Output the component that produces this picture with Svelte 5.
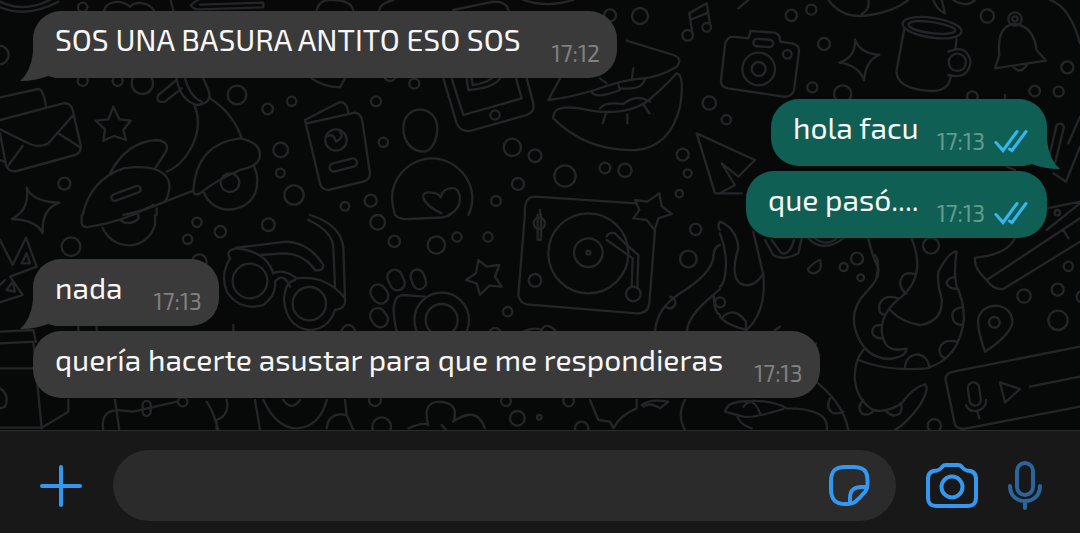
<script>
  const groups = [
    { own: false, items: [{ text: 'SOS UNA BASURA ANTITO ESO SOS', time: '17:12' }] },
    { own: true, items: [{ text: 'hola facu', time: '17:13' }, { text: 'que pasó....', time: '17:13' }] },
    { own: false, items: [{ text: 'nada', time: '17:13' }, { text: 'quería hacerte asustar para que me respondieras', time: '17:13' }] }
  ];

  let draft = $state('');

  // Wallpaper doodles, drawn as six tiles of 1080 x 645 units.
  const tiles = [
    {
      x: 0, y: 0,
      circles: [[248,22,14],[248,243,15],[353,243,15],[427,250,32],[711,285,28],[803,327,16],[875,304,14],[842,450,22],[841,519,13],[882,585,29],[193,551,18],[1035,619,13],[-2,165,28],[690,548,28],[1008,420,32]],
      pills: [[378,580,92,20,-20],[1030,495,84,25,-14]],
      d: 'M0 5Q70 40 150 0M0 22Q80 55 175 5M312 32C320 5 360-5 390 20C410 0 450 10 462 32M512 0L520 32M572 15L600-5M572 15Q580 30 600 28L790 22V8L600 14M950 30Q960-5 1000 0Q1050 0 1060 30M0 292L115 267Q130 268 138 318M0 360L190 310Q212 308 218 330L242 435Q245 458 225 465L50 513Q25 517 18 495L0 400M0 388L90 432Q120 445 145 430L220 345M68 438L22 500M172 398L238 440M0 480L12 485M340 320L358 358L392 362L370 390L378 420L342 408L310 422L315 388L287 362L325 358ZM80 562Q95 605 178 608Q125 625 128 700Q110 660 35 657Q90 630 80 562M330 520Q380 425 470 420Q510 425 498 455L465 505M248 645Q270 540 370 505Q480 490 505 540Q515 570 495 605Q440 630 370 645M495 605L580 572M470 625V645M580 570Q590 430 720 415Q790 430 778 475Q770 500 720 510Q650 540 600 580Q580 590 580 570M612 578C640 650 740 640 765 580Q780 540 763 500M530 235Q540 300 590 315Q640 310 625 270L610 235M555 235Q570 290 605 305M530 240L475 285Q465 310 495 305L545 265M583 315Q610 380 570 450Q540 500 500 515M630 295Q700 340 725 415M915 360L1015 308Q1040 300 1045 340M920 370L1065 338Q1085 340 1088 370L1110 520Q1110 540 1090 545L985 570Q965 570 960 550L915 360M985 408Q1000 398 1008 425Q1035 410 1020 395M935 235Q970 260 1020 262L1035 235'
    },
    {
      x: 1080, y: 0,
      circles: [[840,48,24],[163,251,15],[90,225,18],[48,304,15],[70,427,14],[405,345,14],[457,442,26],[525,467,19],[615,528,32],[735,504,16],[795,511,20],[474,552,18],[408,603,15],[32,602,18],[1048,309,20],[968,464,18],[983,520,12],[958,581,11],[750,46,18],[983,106,16],[1040,82,13]],
      pills: [],
      d: 'M58 30Q60 10 100 0M280 30L400 5Q440 5 445 30M490 0Q560 25 640 0M250 235L290 370Q300 395 330 393L500 345Q525 335 520 310L500 235M275 235L310 345L485 295L468 235M320 235L325 270Q400 265 420 235M335 235L338 255Q375 250 395 235M130 385C130 310 230 310 232 385C230 430 210 455 190 455C160 455 130 430 130 385M105 645C70 540 150 475 215 475C300 475 365 565 325 645M245 640C180 610 175 570 215 578Q235 580 242 592Q250 560 285 565Q305 580 298 610Q290 635 265 645M800 122L940 165Q970 175 950 200Q900 230 850 235Q790 240 740 258Q650 290 565 300L600 235M580 350C580 320 620 320 660 325C720 340 800 345 860 305Q910 265 950 220Q975 225 960 320Q930 440 830 450Q680 455 580 355M695 275Q705 300 780 270L775 255M785 265Q850 270 855 235M720 325Q735 305 790 312Q830 280 870 305M738 340L728 370M802 343V370M850 312L868 340M720 235L740 250M820 205L815 240M997 98L988 40L1040 10L1050 72M990 60L1045 38M1145 580L1065 580L1010 400L1185 480M825 600L862 605L898 580L905 618L935 642L895 655L884 690L860 660L820 655L838 630ZM495 645Q490 590 525 590L830 610M540 645V630'
    },
    {
      x: 2160, y: 0,
      circles: [[214,46,17],[274,29,15],[312,132,18],[277,262,15],[368,282,26],[802,48,20],[1042,202,18],[944,273,16],[1016,275,15],[757,290,16],[19,359,14],[202,163,13],[116,207,49],[116,207,21],[712,187,26],[885,57,20],[885,57,8],[1012,638,8]],
      pills: [[130,129,60,22,4]],
      d: 'M55 25L85 0M325 0Q370 60 450 45Q520 35 565 0M445 0Q450 30 425 42M640 0Q650 30 675 40L665 0M700 0Q740 25 765 0M990 0Q1050 20 1080 130M40 110L85 115L92 93L165 98Q182 105 180 125L215 130Q240 135 237 155L222 270Q215 292 190 290L25 265Q0 260 3 240L15 135Q20 110 40 110M405 118Q420 160 478 165Q438 180 432 240Q415 195 358 188Q408 172 405 118M553 85L530 210Q525 265 630 273Q690 275 692 225M710 118L706 145M685 155Q740 130 752 185Q745 240 685 225M548 70C560 30 730 60 724 95C720 135 545 110 548 70M565 72C580 50 710 75 706 92C700 112 565 98 565 72M825 205L838 165Q830 80 880 72Q940 75 950 150L978 182ZM880 200Q900 225 920 195M105 480L55 530L5 490L45 555L0 580M985 480L1010 375Q1025 365 1032 380L1005 490M1000 520L1038 545L1080 440M1080 350L1045 430M980 625L1080 605M980 690L1080 610M860 500L885 510M855 285V300'
    },
    {
      x: 0, y: 645,
      circles: [[213,95,28],[591,22,14],[661,50,17],[563,73,14],[805,29,19],[598,140,22],[1045,350,20],[548,560,14],[750,198,52],[928,266,50]],
      pills: [[440,580,24,45,0]],
      d: 'M245 0V25Q250 40 270 35Q370 20 460-30M308 38C340 110 440 110 465 30V0M360 15Q385 35 415 12V0M0 75L38 150L78 68L110 155L30 185L68 240L0 262M65 145L80 115L90 145ZM20 225L38 200L45 230ZM0 210L15 195M690 130Q660 180 680 230Q720 290 790 270Q830 240 825 200M690 130Q675 105 710 100Q800 110 820 175Q850 160 890 190Q980 180 1035 250Q1040 280 1005 285Q985 345 925 345Q860 335 852 255Q855 200 885 195M825 200Q850 170 870 215M710 98L860 80Q930 85 970 150Q970 170 945 165Q910 115 850 115L780 120M930 0Q1025 30 1030 100L1035 245M925 15Q1000 50 1000 100L1005 215M0 350L100 345L108 380L0 385M0 460H100M100 380L125 640M0 638H125L205 590V555M0 520Q30 540 15 575L0 580M235 335V350M290 335V350M700 330V350M310 645Q300 590 350 585L400 590L530 560M345 555L358 645M680 555Q690 600 650 615V645M620 560Q640 590 655 645M765 555L780 645M790 555Q830 640 890 640Q960 635 980 555M850 555Q875 590 900 555M980 640Q985 590 1040 600L1035 555M1040 600L1060 645'
    },
    {
      x: 1080, y: 645,
      circles: [[53,22,22],[103,79,17],[229,90,26],[291,66,14],[384,66,14],[443,290,14],[1007,43,17],[985,132,25],[45,555,18],[438,558,15],[472,610,22],[538,607,7],[626,558,16],[65,635,28],[665,640,20],[405,357,18],[685,115,120],[685,113,43],[685,113,6],[820,237,22],[525,196,19],[245,315,82],[245,315,48],[538,25,17]],
      pills: [[108,195,44,64,-25],[175,193,40,60,-20],[58,237,46,60,-35],[57,308,46,60,-35]],
      d: 'M105 0Q120 15 150 12L230 8Q250 10 270 0M495-5L475 240Q480 265 500 268L830 295Q865 295 868 265L885 45M740 65Q745 50 765 55L800 90L835 120L832 215M740 75L790 110L818 130L815 215M533 0V75H543V0M355 135L380 155L418 150L405 185L425 215L388 212L360 240L350 205L318 195L348 175ZM110 350Q85 240 130 240L195 245M490 350Q520 335 545 345Q555 320 585 345M145 640Q190 620 205 630Q185 560 240 560Q300 565 280 620Q350 570 375 640M245 630L258 645M690 555L715 615L750 620L760 640Q780 600 830 580V555M845 570Q870 550 925 560L900 580Q870 560 850 575M975 555Q950 600 975 645M1080 90Q1060 95 1060 130Q1050 180 960 235Q890 280 885 350M980 350Q985 300 1060 240L1080 222M915 272Q930 290 945 270Q950 250 930 245M1062 245Q1060 290 1080 300M1080 20Q1070 35 1080 45'
    },
    {
      x: 2160, y: 645,
      circles: [[411,131,18],[371,156,12],[422,188,10],[633,92,24],[912,243,20],[1013,224,18],[1045,154,14],[1014,316,29],[823,322,16],[643,632,20],[1088,245,18],[0,262,15]],
      pills: [[763,537,34,70,-8]],
      d: 'M0 20Q50 40 55 100Q30 180 60 205Q100 225 130 175M0 55Q25 120 15 180Q10 210 0 215M100 50L130 180Q140 290 80 345Q20 330 0 305M5 310Q40 270 78 320V345M135 75L160 120Q190 140 235 115L245 70M155 75L185 115Q210 120 222 75M265 70Q310 115 370 70M285 70Q320 95 350 70M265 160Q285 140 300 135Q310 170 280 175Q262 172 265 160M445 70Q455 120 475 160Q480 190 440 230Q390 280 405 340Q430 430 510 432Q560 425 560 400Q490 420 485 345Q485 290 545 245Q620 180 575 70M415 435Q500 470 620 460Q720 430 732 310Q730 250 710 215Q700 170 710 110Q690 105 655 170Q650 200 665 250Q670 320 600 330Q550 325 510 285M585 178Q545 165 540 205Q545 230 560 235M535 250Q490 235 478 270Q475 295 492 300M480 330Q455 330 457 355Q465 370 485 370M705 185Q680 190 680 205Q685 220 708 222M725 277Q695 280 697 305Q700 330 728 330M710 380Q665 370 658 405Q660 425 675 430M555 462Q555 420 595 418Q625 425 628 458M465 120Q480 135 470 185M430 405Q400 440 405 500Q415 560 460 585Q500 595 545 565Q580 515 615 508Q630 520 600 570Q560 625 525 645M430 555Q410 575 425 595Q445 605 460 588M500 590Q520 610 540 595Q550 575 540 565M885 70Q860 120 765 128Q760 160 800 195Q820 225 850 222L1080 80M800 195L1080 10M1030 45L1045 70M795 410Q770 340 775 310C790 255 880 260 877 325Q865 365 795 410M1080 395L700 470Q675 475 677 495L705 630Q715 645 740 640L1080 575M738 570Q745 590 770 588Q800 580 798 555M772 588L778 610M840 502L900 522L855 562ZM930 515L1080 485M275 490Q370 560 385 645M15 590Q20 565 60 560Q150 550 200 580Q330 580 320 645M70 575Q100 540 120 595M15 590L70 605Q100 610 190 582M50 600Q60 630 95 640M330 550Q315 580 340 595Q365 595 370 590M165 345L180 335M280 405L288 385'
    }
  ];
</script>

<div class="app">
  <main class="chat">
    <svg class="wallpaper" viewBox="0 0 3240 1290" preserveAspectRatio="xMinYMin slice" aria-hidden="true">
      {#each tiles as t}
        <g transform="translate({t.x} {t.y})">
          {#each t.circles as [cx, cy, r]}<circle {cx} {cy} {r} />{/each}
          {#each t.pills as [cx, cy, w, h, a]}
            <rect x={cx - w / 2} y={cy - h / 2} width={w} height={h} rx={Math.min(w, h) / 2} transform="rotate({a} {cx} {cy})" />
          {/each}
          <path d={t.d} />
        </g>
      {/each}
    </svg>

    {#each groups as g}
      <section class="group" class:own={g.own}>
        {#each g.items as m, i}
          <article class="bubble">
            {#if i === 0}
              <svg class="tail" viewBox="0 0 44 40" aria-hidden="true">
                <path d="M13 0V10Q11 30 0 39Q16 39 28 34L36 36H44V0Z" />
              </svg>
            {/if}
            <p>{m.text}</p>
            <time>{m.time}</time>
            {#if g.own}
              <svg class="ticks" viewBox="0 0 34 24" role="img" aria-label="Leído">
                <path d="M2 13.5L9 21.5L23 2.5M15.500 20L18 21.500L32 2.5" />
              </svg>
            {/if}
          </article>
        {/each}
      </section>
    {/each}
  </main>

  <footer class="composer">
    <button class="plus" aria-label="Adjuntar">
      <svg viewBox="0 0 42 42" width="42" height="42"><path d="M21 2V40M2 21H40" /></svg>
    </button>
    <div class="field">
      <input type="text" aria-label="Mensaje" bind:value={draft} />
      <button aria-label="Stickers">
        <svg viewBox="0 0 42 42" width="42" height="42"><path d="M21 2H25C36 2 39.500 6 39.500 16V19C39.500 23 38.500 25 37 27C33.500 31 31 33.500 27 37C25 38.500 23 39 20 39H17C7 39 3 34 3 24V16C3 6 7 2 17 2ZM22 38V33C22 25 26 22 34 22H39" /></svg>
      </button>
    </div>
    <button class="camera" aria-label="Cámara">
      <svg viewBox="0 0 52 46" width="52" height="46"><path d="M20 2H32C37 2 36 7 41 7.500C47 7.500 50 10 50 16V34C50 41 47 43 41 43H11C5 43 2 41 2 34V16C2 10 5 7.500 11 7.500C16 7 15 2 20 2Z" /><circle cx="26" cy="24" r="10.500" /></svg>
    </button>
    <button class="mic" aria-label="Mensaje de voz">
      <svg viewBox="0 0 34 50" width="34" height="50"><rect x="9" y="2" width="16" height="32" rx="8" /><path d="M2 25C2 34 8 40 17 40S32 34 32 25M17 40V47" /></svg>
    </button>
  </footer>
</div>

<style>
  :global(body) {
    margin: 0;
    background: #181818;
  }
  .app {
    display: flex;
    flex-direction: column;
    min-height: 100vh;
    font-family: 'Exo 2', Roboto, 'Noto Sans', sans-serif;
  }
  .chat {
    position: relative;
    flex: 1;
    display: flex;
    flex-direction: column;
    gap: 21px;
    padding: 11px 33px 31px;
    overflow: hidden;
    background: #070909;
  }
  .wallpaper {
    position: absolute;
    top: 0;
    left: 0;
    width: 100%;
    height: 100%;
    fill: none;
    stroke: #232527;
    stroke-width: 7;
    stroke-linejoin: round;
    stroke-linecap: round;
  }
  .group {
    position: relative;
    display: flex;
    flex-direction: column;
    align-items: flex-start;
    gap: 5px;
    --fill: #3a3a3a;
    --muted: #808080;
  }
  .own {
    align-items: flex-end;
    --fill: #105f54;
    --muted: #659a90;
  }
  .bubble {
    position: relative;
    display: flex;
    align-items: flex-end;
    box-sizing: border-box;
    min-height: 67px;
    padding: 8px 17px 12px 22px;
    border-radius: 28px;
    background: var(--fill);
  }
  .tail {
    position: absolute;
    bottom: -4px;
    left: -13px;
    width: 44px;
    height: 40px;
    fill: var(--fill);
  }
  .own .tail {
    left: auto;
    right: -13px;
    transform: scaleX(-1);
  }
  p {
    position: relative;
    align-self: flex-start;
    margin: 0;
    font-size: 30px;
    line-height: 40px;
    color: #f7f7f7;
  }
  time {
    position: relative;
    margin-left: 31px;
    font-size: 23px;
    line-height: 26px;
    color: var(--muted);
  }
  .own time {
    margin-left: 18px;
  }
  .ticks {
    position: relative;
    flex: none;
    width: 34px;
    height: 24px;
    margin: 0 2px 1px 9px;
    fill: none;
    stroke: #34b7f1;
    stroke-width: 3;
    stroke-linecap: round;
  }
  .composer {
    display: flex;
    align-items: center;
    padding: 19px 38px 12px 40px;
    border-top: 1px solid #2b2b2b;
    background: #181818;
  }
  button {
    display: flex;
    flex: none;
    padding: 0;
    border: 0;
    background: none;
    cursor: pointer;
  }
  button svg {
    fill: none;
    stroke: #3497f0;
    stroke-width: 4;
    stroke-linecap: round;
    stroke-linejoin: round;
  }
  .field {
    display: flex;
    flex: 1;
    align-items: center;
    min-width: 0;
    height: 71px;
    margin: 0 30px 0 31px;
    padding: 0 26px 0 30px;
    box-sizing: border-box;
    border-radius: 36px;
    background: #2b2b2b;
  }
  input {
    flex: 1;
    min-width: 0;
    height: 100%;
    padding: 0;
    border: 0;
    outline: 0;
    background: none;
    color: #f7f7f7;
    font: inherit;
    font-size: 30px;
  }
  .mic {
    margin-left: 30px;
  }
  .mic svg {
    stroke: #2b659c;
  }
</style>
